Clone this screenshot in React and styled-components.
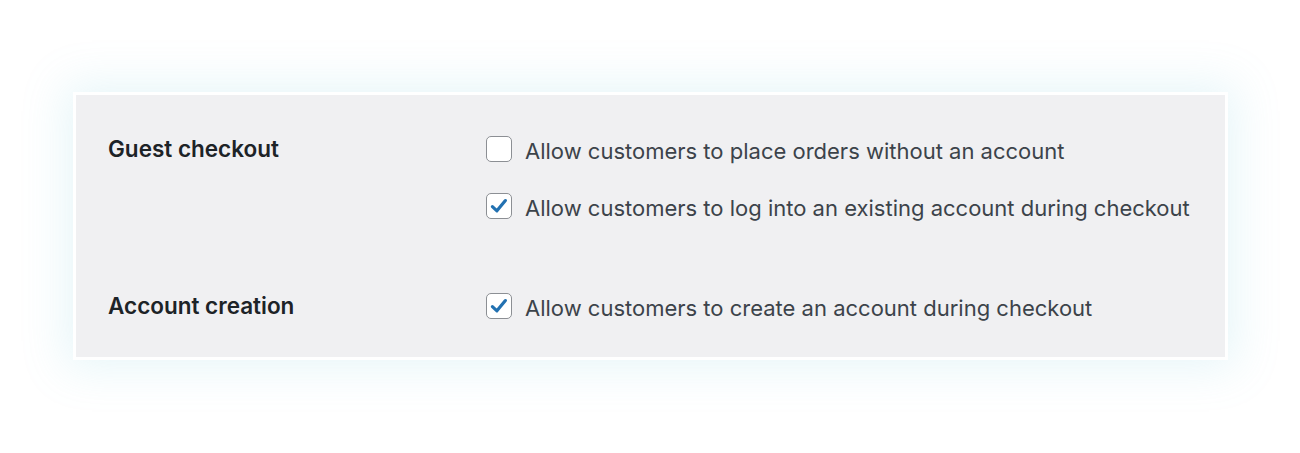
import styled, { createGlobalStyle } from 'styled-components';

const GlobalStyle = createGlobalStyle`
  * {
    box-sizing: border-box;
  }

  body {
    margin: 0;
    background-color: #ffffff;
    font-family: Inter, 'Noto Sans', sans-serif;
  }
`;

const settings = [
  {
    id: 'guest',
    title: 'Guest checkout',
    options: [
      { id: 'guest-orders', label: 'Allow customers to place orders without an account', checked: false },
      { id: 'guest-login', label: 'Allow customers to log into an existing account during checkout', checked: true },
    ],
  },
  {
    id: 'account',
    title: 'Account creation',
    options: [
      { id: 'account-create', label: 'Allow customers to create an account during checkout', checked: true },
    ],
  },
];

const CheckIcon = () => (
  <svg width="20" height="20" viewBox="0 0 20 20" aria-hidden="true">
    <path d="M3.4 10.6 L7.9 14.8 L16.4 4.6" fill="none" stroke="#2271b1" strokeWidth="3.2" strokeLinecap="round" strokeLinejoin="round" />
  </svg>
);

const App = () => {
  return (
    <>
      <GlobalStyle />
      <Page>
        <Panel>
          {settings.map(section => (
            <SettingRow key={section.id}>
              <SettingTitle>{section.title}</SettingTitle>
              <OptionList>
                {section.options.map(option => (
                  <Option key={option.id}>
                    <Box>{option.checked && <CheckIcon />}</Box>
                    <OptionText>{option.label}</OptionText>
                  </Option>
                ))}
              </OptionList>
            </SettingRow>
          ))}
        </Panel>
      </Page>
    </>
  );
};

const Page = styled.div`
  width: 1300px;
  height: 453px;
  padding: 92px 72px 0 73px;
`;

const Panel = styled.section`
  display: flex;
  flex-direction: column;
  gap: 74px;
  width: 1155px;
  height: 268px;
  padding: 41px 32px 0 32px;
  border: 3px solid #ffffff;
  background-color: #f0f0f2;
  box-shadow: 0 0 42px 8px rgba(110, 200, 220, 0.17);
`;

const SettingRow = styled.div`
  display: grid;
  grid-template-columns: 378px 1fr;
  align-items: start;
`;

const SettingTitle = styled.h3`
  margin: 0;
  height: 26px;
  line-height: 26px;
  color: #1d2327;
  font-size: 22.5px;
  font-weight: 600;
`;

const OptionList = styled.div`
  display: flex;
  flex-direction: column;
  gap: 31px;
`;

const Option = styled.label`
  display: flex;
  align-items: center;
  gap: 13px;
  height: 26px;
`;

const Box = styled.span`
  display: flex;
  justify-content: center;
  align-items: center;
  width: 26px;
  height: 26px;
  border: 1px solid #8c8f94;
  border-radius: 5px;
  background-color: #ffffff;
`;

const OptionText = styled.span`
  margin-top: 3px;
  color: #3c434a;
  font-size: 22px;
  line-height: 26px;
`;

export default App;
